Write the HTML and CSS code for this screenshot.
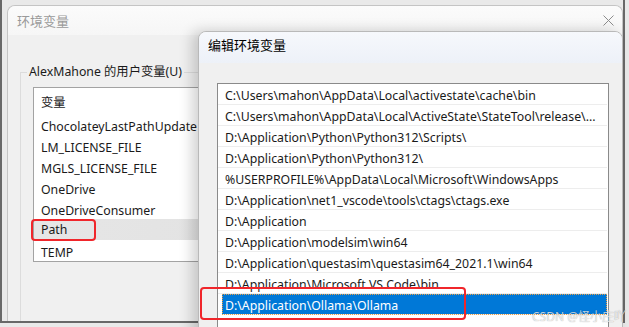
FILE: index.html
```html
<!DOCTYPE html>
<html lang="zh-CN">
<head>
    <meta charset="UTF-8">
    <title>编辑环境变量</title>
    <link rel="stylesheet" href="styles.css">
</head>
<body>
    <div class="frame">
        <div class="back-win">
            <div class="back-title">
                <span>环境变量</span>
                <svg class="close" width="11" height="11" viewBox="0 0 11 11">
                    <path d="M0.5 0.5 L10.5 10.5 M10.5 0.5 L0.5 10.5" stroke="#8c8c8c" stroke-width="1" fill="none"/>
                </svg>
            </div>
            <div class="back-body">
                <fieldset class="group">
                    <legend>AlexMahone 的用户变量(U)</legend>
                    <div class="var-list">
                        <div class="var-head">变量</div>
                        <div class="var-row">ChocolateyLastPathUpdate</div>
                        <div class="var-row">LM_LICENSE_FILE</div>
                        <div class="var-row">MGLS_LICENSE_FILE</div>
                        <div class="var-row">OneDrive</div>
                        <div class="var-row">OneDriveConsumer</div>
                        <div class="var-row selected">Path</div>
                        <div class="var-row">TEMP</div>
                    </div>
                </fieldset>
            </div>
        </div>
    </div>

    <div class="edit-win">
        <div class="edit-title">编辑环境变量</div>
        <div class="edit-body">
            <div class="path-list">
                <div class="path-row">C:\Users\mahon\AppData\Local\activestate\cache\bin</div>
                <div class="path-row">C:\Users\mahon\AppData\Local\ActiveState\StateTool\release\...</div>
                <div class="path-row">D:\Application\Python\Python312\Scripts\</div>
                <div class="path-row">D:\Application\Python\Python312\</div>
                <div class="path-row">%USERPROFILE%\AppData\Local\Microsoft\WindowsApps</div>
                <div class="path-row">D:\Application\net1_vscode\tools\ctags\ctags.exe</div>
                <div class="path-row">D:\Application</div>
                <div class="path-row">D:\Application\modelsim\win64</div>
                <div class="path-row">D:\Application\questasim\questasim64_2021.1\win64</div>
                <div class="path-row">D:\Application\Microsoft VS Code\bin</div>
                <div class="path-row active">D:\Application\Ollama\Ollama</div>
                <div class="path-row"></div>
            </div>
        </div>
    </div>

    <!-- red annotation boxes -->
    <div class="mark mark-path"></div>
    <div class="mark mark-ollama"></div>
    <div class="watermark">CSDN @怪小庄吖</div>
</body>
</html>
```
FILE: styles.css
```css
* { margin: 0; padding: 0; box-sizing: border-box; }
html, body {
    width: 629px;
    height: 327px;
    overflow: hidden;
}
body {
    position: relative;
    background: #e9e9e9;
    font-family: "Noto Sans", "Noto Sans CJK SC", sans-serif;
    font-size: 12.3px;
    color: #1a1a1a;
}

/* outer window frame + back dialog */
.frame {
    position: absolute;
    left: 0;
    top: -10px;
    width: 625px;
    height: 333px;
    border: 2px solid #686868;
    border-top: none;
}
.back-win {
    position: absolute;
    left: 5px;
    top: 15px;
    right: 0;
    bottom: 0;
    border: 1px solid #c4c4c4;
    border-bottom: none;
    border-radius: 8px 8px 0 0;
    background: #f0f0f0;
    display: flex;
    flex-direction: column;
    overflow: hidden;
}
.back-title {
    height: 29px;
    flex: none;
    display: flex;
    align-items: center;
    justify-content: space-between;
    padding: 0 9px 0 9px;
    background: linear-gradient(#fbfbfb, #f6f6f6);
    color: #9a9a9a;
    font-size: 13px;
}
.back-title .close { margin-right: -1px; }
.back-body {
    flex: 1;
    padding: 28px 0 0 12px;
}
.group {
    border: 1px solid #dcdcdc;
    border-right: none;
    height: 300px;
    padding: 6px 0 0 12px;
}
.group legend {
    margin-left: -6px;
    padding: 0 2px;
    line-height: 18px;
    color: #1a1a1a;
}
.var-list {
    width: 260px;
    height: 175px;
    background: #fff;
    border: 1px solid #a3a3a3;
}
.var-head {
    height: 26px;
    line-height: 26px;
    padding: 2px 0 0 7px;
}
.var-row {
    height: 21px;
    line-height: 21px;
    padding: 2px 0 0 7px;
}
.var-row.selected {
    padding-top: 1px;
    line-height: 20px;
    background: linear-gradient(90deg, #e6e6e6 0%, #e3e3e3 70%, #d6d6d6 100%);
}

/* front dialog */
.edit-win {
    position: absolute;
    left: 198px;
    top: 31px;
    width: 425px;
    height: 310px;
    border: 1px solid #b9b9b9;
    border-radius: 8px 8px 0 0;
    background: #f0f0f0;
    box-shadow: -6px 0 14px rgba(0,0,0,0.18);
    overflow: hidden;
}
.edit-title {
    height: 31px;
    line-height: 27px;
    padding-left: 9px;
    background: linear-gradient(#f6f8fc, #edf1f8);
    color: #000;
    font-size: 13px;
}
.edit-body {
    padding: 20px 0 0 18px;
}
.path-list {
    width: 392px;
    height: 260px;
    background: #fff;
    border: 1px solid #8a8a8a;
}
.path-row {
    height: 21px;
    line-height: 20px;
    padding: 2px 0 0 7px;
    margin-right: 1px;
    border-bottom: 1px solid #ededed;
    white-space: nowrap;
}
.path-row.active {
    margin-left: 4px;
    margin-right: 1px;
    padding-left: 3px;
    background: #0078d7;
    color: #fff;
    outline: 1px dotted #e8a04a;
    outline-offset: -1px;
}

/* annotations */
.mark {
    position: absolute;
    border: 2.5px solid #f0262b;
    border-radius: 4px;
}
.mark-path {
    left: 31px;
    top: 219px;
    width: 65px;
    height: 22px;
}
.mark-ollama {
    left: 200px;
    top: 287px;
    width: 266px;
    height: 33px;
}
.watermark {
    position: absolute;
    left: 532px;
    top: 307px;
    font-size: 12px;
    color: rgba(255,255,255,0.75);
    text-shadow: 0 0 1px rgba(0,0,0,0.4);
    white-space: nowrap;
}
```
